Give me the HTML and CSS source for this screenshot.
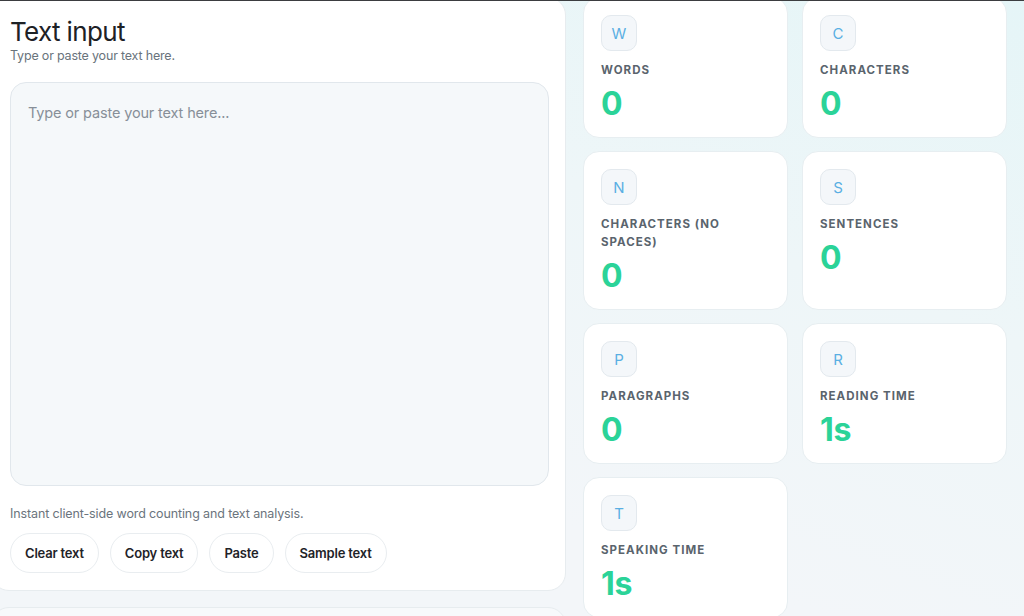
FILE: index.html
```html
<!DOCTYPE html>
<html lang="en">
<head>
  <meta charset="UTF-8" />
  <meta name="viewport" content="width=device-width, initial-scale=1.0"/>
  <title>Word Counter</title>
  <link rel="stylesheet" href="styles.css">
</head>
<body>
  <div class="layout">
    <div class="left-col">
      <section class="editor card">
        <h1 class="title">Text input</h1>
        <p class="subtitle">Type or paste your text here.</p>
        <textarea class="text-box" placeholder="Type or paste your text here..."></textarea>
        <p class="note">Instant client-side word counting and text analysis.</p>
        <div class="actions">
          <button class="pill">Clear text</button>
          <button class="pill">Copy text</button>
          <button class="pill">Paste</button>
          <button class="pill">Sample text</button>
        </div>
      </section>
      <section class="extra card"></section>
    </div>

    <div class="stats">
      <div class="stat">
        <div class="stat-icon">W</div>
        <div class="stat-label">Words</div>
        <div class="stat-value">0</div>
      </div>
      <div class="stat">
        <div class="stat-icon">C</div>
        <div class="stat-label">Characters</div>
        <div class="stat-value">0</div>
      </div>
      <div class="stat">
        <div class="stat-icon">N</div>
        <div class="stat-label">Characters (no spaces)</div>
        <div class="stat-value">0</div>
      </div>
      <div class="stat">
        <div class="stat-icon">S</div>
        <div class="stat-label">Sentences</div>
        <div class="stat-value">0</div>
      </div>
      <div class="stat">
        <div class="stat-icon">P</div>
        <div class="stat-label">Paragraphs</div>
        <div class="stat-value">0</div>
      </div>
      <div class="stat">
        <div class="stat-icon">R</div>
        <div class="stat-label">Reading time</div>
        <div class="stat-value">1s</div>
      </div>
      <div class="stat">
        <div class="stat-icon">T</div>
        <div class="stat-label">Speaking time</div>
        <div class="stat-value">1s</div>
      </div>
    </div>
  </div>
</body>
</html>
```

FILE: styles.css
```css
body {
  margin: 0;
  height: 615px;
  overflow: hidden;
  border-top: 1px solid #3b3d40;
  font-family: Inter, "Noto Sans", sans-serif;
  color: #1f2328;
  background: linear-gradient(200deg, #e5f5f7 0%, #eef6f8 35%, #f3f6f9 70%);
}

.layout {
  display: grid;
  grid-template-columns: 575px 424px;
  gap: 17px;
  margin: -4px 0 0 -9px;
  align-items: start;
}

.left-col {
  display: flex;
  flex-direction: column;
  gap: 16px;
}

.card {
  background: #fff;
  border: 1px solid #e7ecef;
  border-radius: 18px;
}

.editor {
  padding: 18px 16px 17px 18px;
}

.title {
  margin: 0;
  font-size: 26px;
  line-height: 31px;
  font-weight: 400;
  letter-spacing: -0.025em;
  color: #1d2126;
}

.subtitle {
  margin: 0;
  font-size: 12.5px;
  line-height: 18px;
  color: #69737c;
  letter-spacing: -0.015em;
}

.text-box {
  display: block;
  box-sizing: border-box;
  width: 100%;
  height: 404px;
  margin-top: 17px;
  padding: 19px 17px;
  border: 1px solid #e1e7ec;
  border-radius: 16px;
  background: #f5f8fa;
  resize: none;
  font-family: inherit;
  font-size: 14.5px;
  line-height: 22px;
  letter-spacing: -0.01em;
  color: #1f2328;
  outline: none;
}

.text-box::placeholder {
  color: #878f98;
}

.note {
  margin: 19px 0 0;
  font-size: 12.5px;
  line-height: 18px;
  color: #6b747d;
  letter-spacing: -0.01em;
}

.actions {
  display: flex;
  gap: 11px;
  margin-top: 10px;
}

.pill {
  height: 40px;
  padding: 0 14px;
  border: 1px solid #e9edf0;
  border-radius: 20px;
  background: #fff;
  font-family: inherit;
  font-size: 13px;
  font-weight: 600;
  letter-spacing: -0.015em;
  color: #1f2328;
  cursor: pointer;
}

.pill:hover {
  background: #f5f8fa;
}

.extra {
  height: 300px;
  background: #f7f9fb;
}

.stats {
  display: grid;
  grid-template-columns: 205px 205px;
  gap: 13px 14px;
}

.stat {
  background: #fff;
  border: 1px solid #e7eef1;
  border-radius: 16px;
  padding: 17px;
}

.stat-icon {
  width: 34px;
  height: 34px;
  border: 1px solid #e3e9ee;
  border-radius: 10px;
  background: #f4f7fa;
  display: flex;
  align-items: center;
  justify-content: center;
  font-size: 15px;
  color: #5aafe3;
}

.stat-label {
  margin-top: 10px;
  font-size: 11.5px;
  line-height: 18px;
  font-weight: 700;
  letter-spacing: 0.09em;
  text-transform: uppercase;
  color: #5a646d;
}

.stat-value {
  margin-top: 9px;
  font-size: 32px;
  line-height: 32px;
  font-weight: 700;
  color: #2bd398;
  letter-spacing: -0.01em;
}
```
